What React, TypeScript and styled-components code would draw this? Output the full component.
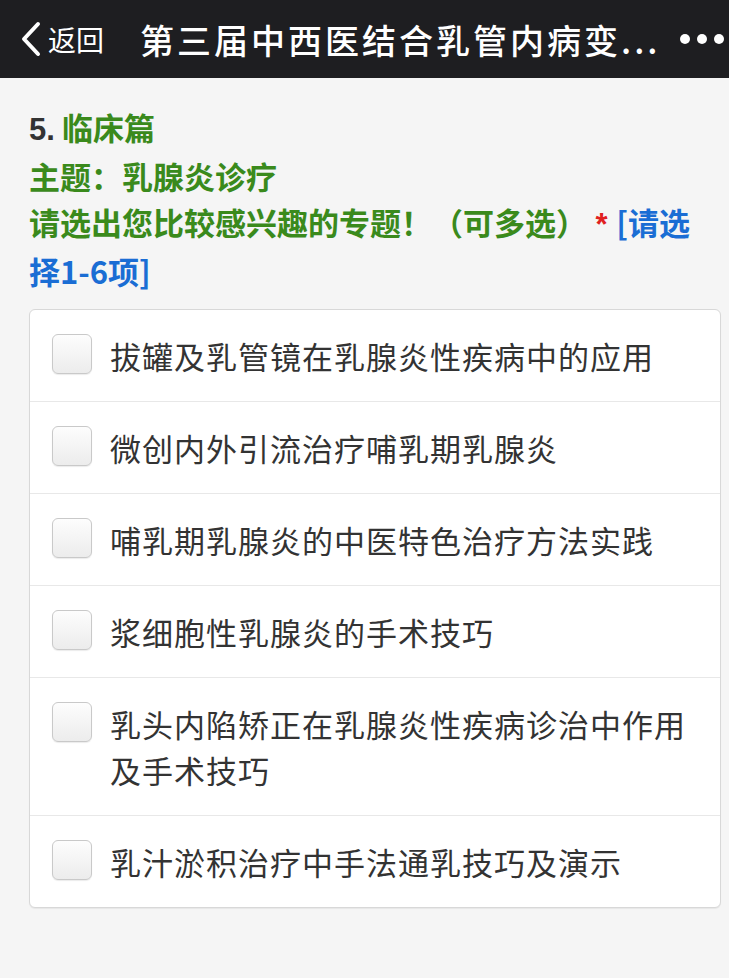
import React from 'react';
import styled, { createGlobalStyle } from 'styled-components';

const GlobalStyle = createGlobalStyle`
    html, body {
        margin: 0;
        padding: 0;
        background: #f5f5f5;
    }
    body {
        font-family: "Noto Sans CJK SC", "Liberation Sans", sans-serif;
        -webkit-font-smoothing: antialiased;
    }
`;

const Page = styled.div`
    width: 729px;
    min-height: 978px;
    background: #f5f5f5;
`;

const NavBar = styled.div`
    display: flex;
    align-items: center;
    height: 78px;
    padding: 0 8px 0 20px;
    background: #1e1e21;
    color: #fff;
    box-sizing: border-box;
`;

const Back = styled.div`
    display: flex;
    align-items: center;
    gap: 6px;
    font-size: 28px;
    flex-shrink: 0;
`;

const NavTitle = styled.div`
    flex: 1;
    margin-left: 36px;
    font-size: 34px;
    font-weight: 500;
    white-space: nowrap;
    letter-spacing: 3px;
`;

const Dots = styled.div`
    display: flex;
    gap: 7px;
    flex-shrink: 0;
    margin-left: 20px;

    span {
        width: 10px;
        height: 10px;
        border-radius: 50%;
        background: #fff;
    }
`;

const Question = styled.div`
    padding: 26px 24px 0 29px;
    font-size: 31px;
    font-weight: bold;
    line-height: 46px;
    color: #3a8a1c;
    word-break: break-all;
`;

const Num = styled.span`
    color: #333;
    font-family: "Liberation Sans", "Noto Sans CJK SC", sans-serif;
`;

const Required = styled.span`
    color: #e02020;
    font-family: "Liberation Sans", sans-serif;
`;

const Hint = styled.span`
    color: #1a6dd4;
`;

const Card = styled.div`
    margin: 15px 8px 0 29px;
    background: #fff;
    border: 1px solid #d8d8d8;
    border-radius: 6px;
    box-shadow: 0 1px 1px rgba(0, 0, 0, 0.06);
`;

const Option = styled.label`
    display: flex;
    align-items: flex-start;
    gap: 18px;
    padding: 23px 16px 22px 22px;
    border-top: ${(props: { first?: boolean }) => (props.first ? 'none' : '1px solid #e8e8e8')};
`;

const Box = styled.span`
    flex-shrink: 0;
    width: 38px;
    height: 38px;
    margin-top: 1px;
    border: 1px solid #c9c9c9;
    border-radius: 6px;
    background: linear-gradient(#fdfdfd, #ececec);
    box-shadow: 0 1px 1px rgba(0, 0, 0, 0.08);
`;

const OptionText = styled.span`
    font-size: 31px;
    line-height: 46px;
    color: #333;
    letter-spacing: 1px;
`;

const options = [
    '拔罐及乳管镜在乳腺炎性疾病中的应用',
    '微创内外引流治疗哺乳期乳腺炎',
    '哺乳期乳腺炎的中医特色治疗方法实践',
    '浆细胞性乳腺炎的手术技巧',
    '乳头内陷矫正在乳腺炎性疾病诊治中作用及手术技巧',
    '乳汁淤积治疗中手法通乳技巧及演示',
];

export default function App() {
    return (
        <Page>
            <GlobalStyle />
            <NavBar>
                <Back>
                    <svg width="22" height="36" viewBox="0 0 22 36">
                        <path d="M18 3 L4 18 L18 33" fill="none" stroke="#fff" strokeWidth="4" strokeLinecap="round" strokeLinejoin="round" />
                    </svg>
                    返回
                </Back>
                <NavTitle>第三届中西医结合乳管内病变...</NavTitle>
                <Dots>
                    <span />
                    <span />
                    <span />
                </Dots>
            </NavBar>
            <Question>
                <div>
                    <Num>5.</Num> 临床篇
                </div>
                <div>主题：乳腺炎诊疗</div>
                <div>
                    请选出您比较感兴趣的专题！（可多选）<Required> * </Required>
                    <Hint>[请选择1-6项]</Hint>
                </div>
            </Question>
            <Card>
                {options.map((text, i) => (
                    <Option key={text} first={i === 0}>
                        <Box />
                        <OptionText>{text}</OptionText>
                    </Option>
                ))}
            </Card>
        </Page>
    );
}
